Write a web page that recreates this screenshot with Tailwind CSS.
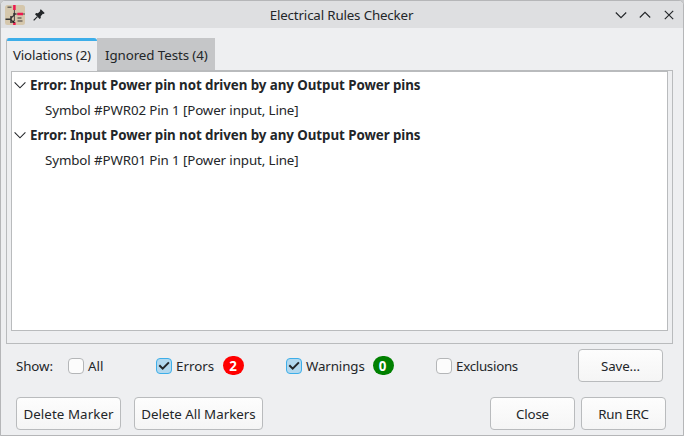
<!DOCTYPE html>
<html lang="en">
<head>
<meta charset="utf-8">
<title>Electrical Rules Checker</title>
<script src="https://cdn.jsdelivr.net/npm/@tailwindcss/browser@4"></script>
</head>
<body class="bg-[#c9cacc] overflow-hidden">
<div class="w-[684px] h-[436px] flex flex-col border border-[#b5b6b8] rounded-t-[5px] overflow-hidden bg-[#eeeff1] font-['Noto_Sans',sans-serif] text-[13.333px] leading-[18px] text-[#232629] whitespace-nowrap">
  <header class="h-[27px] shrink-0 bg-[#dedfe1] flex items-center justify-between pl-[3px] pr-[8px]">
    <div class="flex items-center w-[108px]">
      <svg class="w-[22px] h-[22px]" viewBox="0 0 22 22">
        <rect x="1" y="1" width="20" height="20" rx="2.5" fill="#d5c7ac"/>
        <path d="M3.5 3.2h4M13.5 14h4M13.5 17h5" stroke="#6d675f" stroke-width="1.5"/>
        <path d="M10.4 5v12M10.4 10h10.6" stroke="#4a4a4a" stroke-width="1"/>
        <path d="M10.4 1v5M13.4 10h5.6M10.4 18.2v2.8" stroke="#ed174f" stroke-width="2.5"/>
        <circle cx="10.4" cy="10" r="1.3" fill="#333"/>
        <path d="M1.5 15.3h5.5M7 12v7" stroke="#333" stroke-width="1.5" fill="none"/>
        <path d="M7 14l3.4-3M7 16l3.4 2.6" stroke="#333" stroke-width="1.1" fill="none"/>
        <path d="M7.6 18.6l3.2.4-1-2.8z" fill="#222"/>
      </svg>
      <svg class="w-[14px] h-[14px] ml-[6px]" viewBox="0 0 14 14">
        <path d="M8.8 1.2l3.9 3.9-1 .9-.8-.2-2.2 2.4.1 1.7-1.1 1.1L3 6.2l1.1-1.1 1.8.1L8.3 3l-.4-.8z" fill="#232629"/>
        <path d="M5.4 8.6L1.7 12.3" stroke="#232629" stroke-width="1.2"/>
      </svg>
    </div>
    <h1 class="tracking-[-0.16px]">Electrical Rules Checker</h1>
    <div class="flex items-center justify-end gap-[12px] w-[104px]">
      <svg class="w-[12px] h-[12px]" viewBox="0 0 12 12" fill="none" stroke="#232629" stroke-width="1.15"><path d="M.8 3.5L6 8.7l5.2-5.2"/></svg>
      <svg class="w-[12px] h-[12px]" viewBox="0 0 12 12" fill="none" stroke="#232629" stroke-width="1.15"><path d="M.8 8.5L6 3.3l5.2 5.2"/></svg>
      <svg class="w-[12px] h-[12px]" viewBox="0 0 12 12" fill="none" stroke="#232629" stroke-width="1.15"><path d="M1.8 1.8l8.4 8.4M10.2 1.8l-8.4 8.4"/></svg>
    </div>
  </header>

  <main class="pt-[10px] pl-[5px] pr-[10px]">
    <nav class="flex h-[32px]">
      <div class="w-[91px] h-[33px] z-10 shrink-0 bg-[#eeeff1] border-l border-[#b9bbbd] rounded-t-[3px] overflow-hidden">
        <div class="h-[3px] bg-[#3daee9]"></div>
        <div class="pt-[5px] pl-[6px] tracking-[-0.18px]">Violations (2)</div>
      </div>
      <div class="w-[118px] h-[32px] shrink-0 bg-[#c5c6c8] pt-[8px] pl-[8px] tracking-[-0.08px]">Ignored Tests (4)</div>
    </nav>
    <section class="h-[274px] w-[667px] border border-[#b9bbbd] pl-[4px]">
      <div class="w-[657px] h-[260px] bg-white border border-[#b9bbbd]">
        <div class="h-[25px] flex items-center pl-[2px] font-bold tracking-[-0.06px]"><svg class="w-[12px] h-[8px] mr-[4px]" viewBox="0 0 12 8" fill="none" stroke="#232629" stroke-width="1.1"><path d="M.6 1.4L6 6.8l5.4-5.4"/></svg>Error: Input Power pin not driven by any Output Power pins</div>
        <div class="h-[25px] flex items-center pl-[33px] tracking-[-0.11px]">Symbol #PWR02 Pin 1 [Power input, Line]</div>
        <div class="h-[25px] flex items-center pl-[2px] font-bold tracking-[-0.06px]"><svg class="w-[12px] h-[8px] mr-[4px]" viewBox="0 0 12 8" fill="none" stroke="#232629" stroke-width="1.1"><path d="M.6 1.4L6 6.8l5.4-5.4"/></svg>Error: Input Power pin not driven by any Output Power pins</div>
        <div class="h-[25px] flex items-center pl-[33px] tracking-[-0.11px]">Symbol #PWR01 Pin 1 [Power input, Line]</div>
      </div>
    </section>
  </main>

  <div class="mt-[5px] h-[33px] flex items-center pl-[15px] shrink-0">
    <span class="w-[52px] tracking-[-0.1px]">Show:</span>
    <label class="w-[88px] flex items-center gap-[4px]"><span class="size-[16px] bg-[#fcfcfc] border border-[#b4b6b8] rounded-[4px]"></span>All</label>
    <label class="w-[67px] flex items-center gap-[4px]"><svg class="size-[16px]" viewBox="0 0 16 16"><rect x=".5" y=".5" width="15" height="15" rx="3.5" fill="#b2d8ee" stroke="#3daee9"/><path d="M3.3 7.2l3.4 3.4 6.2-6.2" fill="none" stroke="#232629" stroke-width="2"/></svg>Errors</label>
    <span class="w-[21px] h-[19px] rounded-[9.5px] bg-[#ff0000] text-white font-bold flex items-center justify-center pr-[1px] mr-[42px]">2</span>
    <label class="w-[87px] flex items-center gap-[4px] tracking-[-0.12px]"><svg class="size-[16px]" viewBox="0 0 16 16"><rect x=".5" y=".5" width="15" height="15" rx="3.5" fill="#b2d8ee" stroke="#3daee9"/><path d="M3.3 7.2l3.4 3.4 6.2-6.2" fill="none" stroke="#232629" stroke-width="2"/></svg>Warnings</label>
    <span class="w-[21px] h-[19px] rounded-[9.5px] bg-[#008000] text-white font-bold flex items-center justify-center pr-[2px] mr-[42px]">0</span>
    <label class="w-[142px] flex items-center gap-[4px] tracking-[-0.28px]"><span class="size-[16px] bg-[#fcfcfc] border border-[#b4b6b8] rounded-[4px]"></span>Exclusions</label>
    <button class="w-[85px] h-[33px] rounded-[4px] border border-[#b9bbbd] bg-linear-to-b from-[#fdfdfd] to-[#f5f5f5] tracking-[-0.1px]">Save...</button>
  </div>

  <footer class="mt-[15px] h-[33px] flex items-center pl-[15px] shrink-0">
    <button class="w-[105px] h-[33px] rounded-[4px] border border-[#b9bbbd] bg-linear-to-b from-[#fdfdfd] to-[#f5f5f5] mr-[13px] tracking-[0.08px]">Delete Marker</button>
    <button class="w-[129px] h-[33px] rounded-[4px] border border-[#b9bbbd] bg-linear-to-b from-[#fdfdfd] to-[#f5f5f5] mr-[227px]">Delete All Markers</button>
    <button class="w-[85px] h-[33px] rounded-[4px] border border-[#b9bbbd] bg-linear-to-b from-[#fdfdfd] to-[#f5f5f5] mr-[6px] tracking-[-0.2px]">Close</button>
    <button class="w-[85px] h-[33px] rounded-[4px] border border-[#b9bbbd] bg-linear-to-b from-[#fdfdfd] to-[#f5f5f5] tracking-[-0.3px]">Run ERC</button>
  </footer>
</div>
</body>
</html>
